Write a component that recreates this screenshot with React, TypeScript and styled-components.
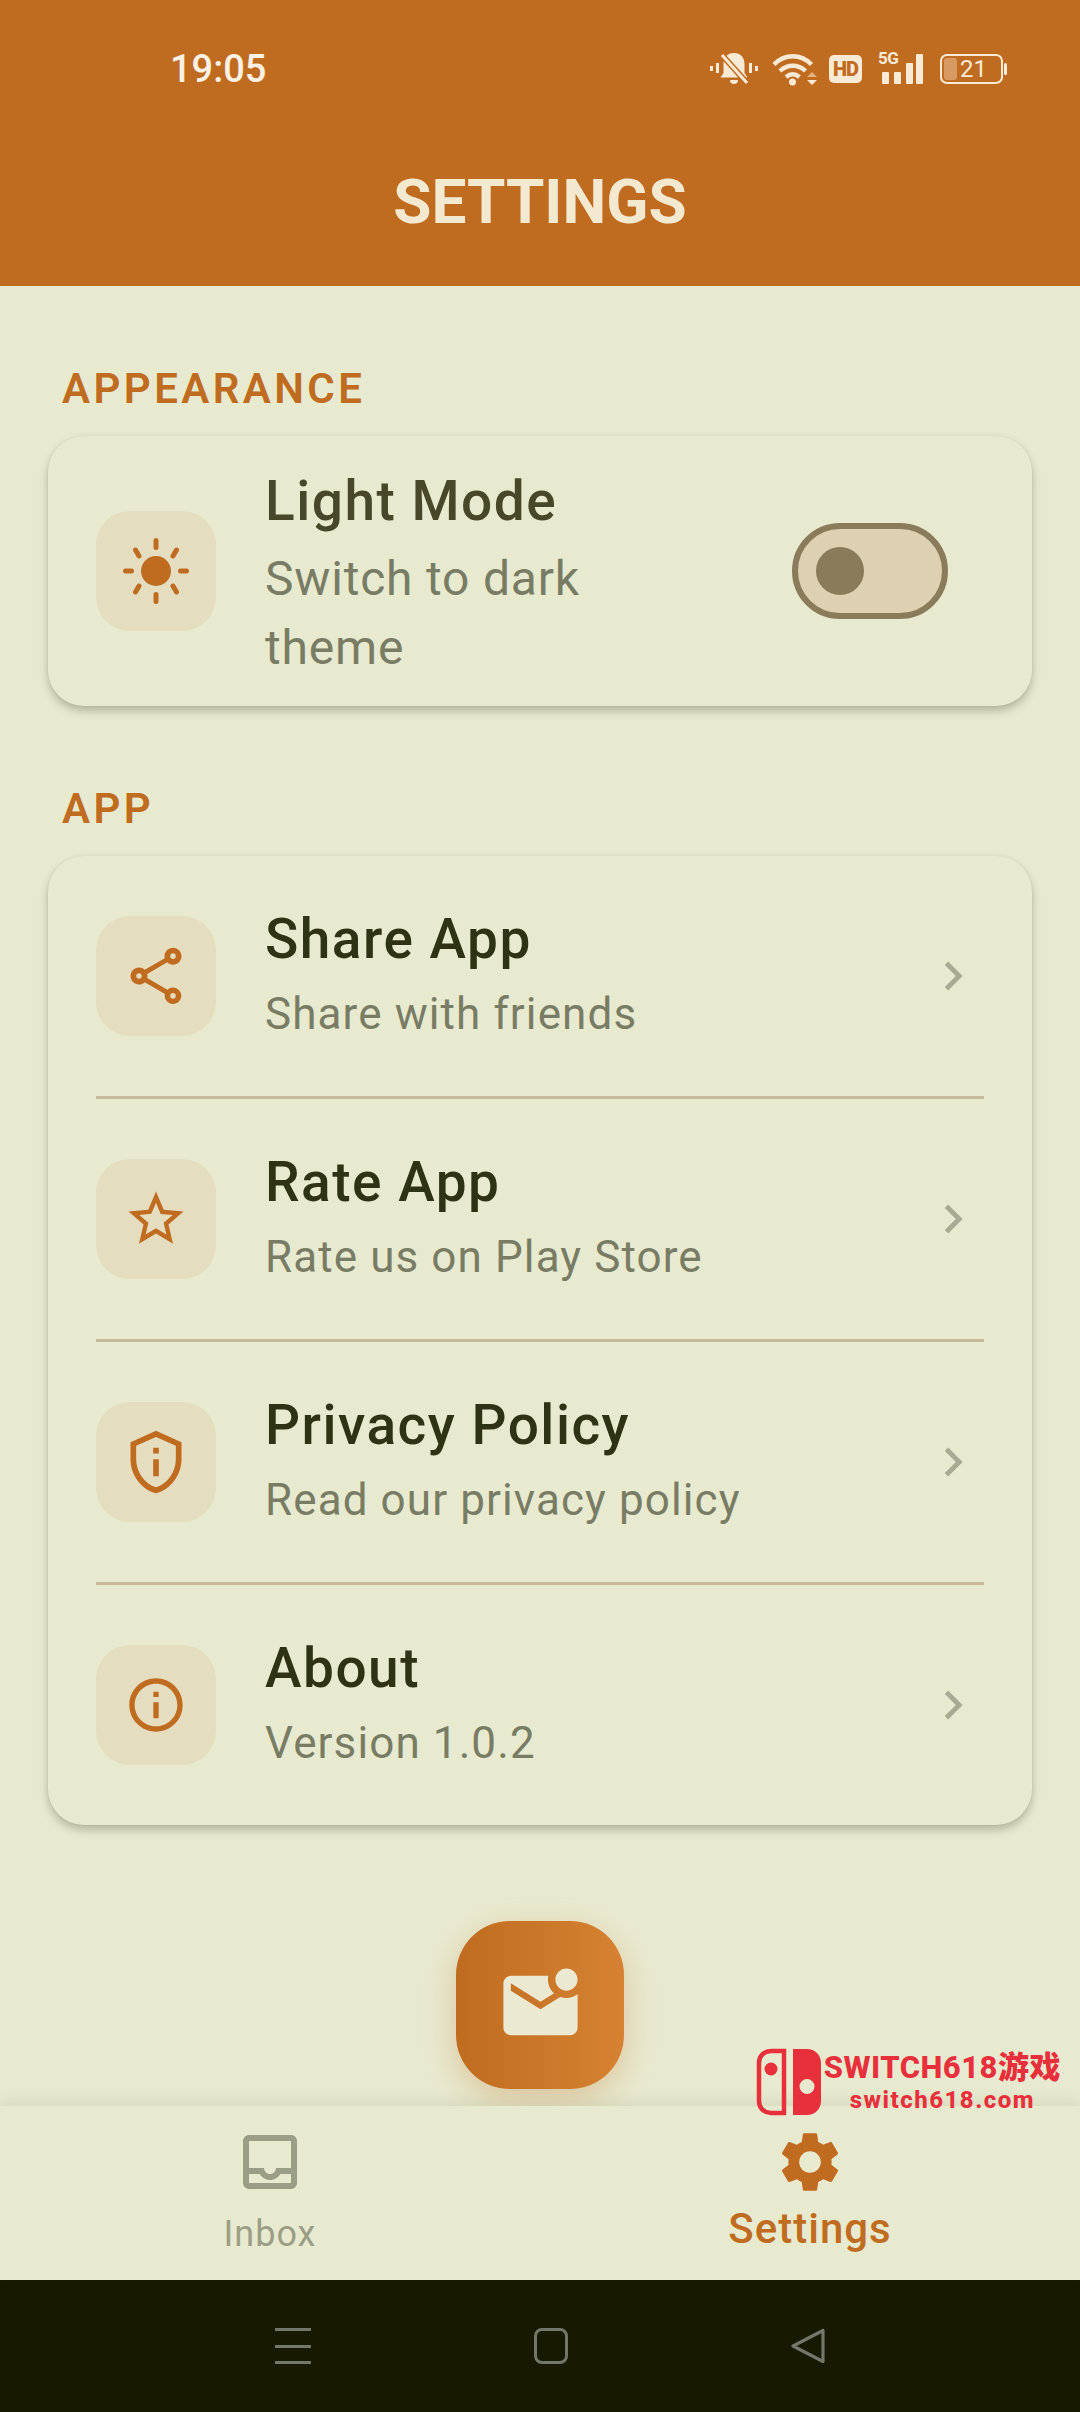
import React from "react";
import styled, { createGlobalStyle } from "styled-components";
import {
  MdChevronRight,
  MdInfoOutline,
  MdMarkEmailUnread,
  MdOutlineInbox,
  MdOutlinePrivacyTip,
  MdOutlineShare,
  MdSettings,
  MdStarBorder,
} from "react-icons/md";

const GlobalStyle = createGlobalStyle`
  html, body {
    margin: 0;
    padding: 0;
    background: #e8ead0;
  }
  * {
    box-sizing: border-box;
  }
`;

const ORANGE = "#c06c20";
const font = `Roboto, "Noto Sans CJK SC", sans-serif`;

const SunIcon = () => (
  <svg width="68" height="68" viewBox="0 0 68 68" fill="none">
    <circle cx="34" cy="34" r="15" fill={ORANGE} />
    <g stroke={ORANGE} strokeWidth="5" strokeLinecap="round">
      <path d="M34 3.5v7M34 57.5v7M3.5 34h6M58.5 34h6" />
      <path d="M13.5 13l3.5 6M54.5 13l-3.5 6M13.5 55l3.5-6M54.5 55l-3.5-6" />
    </g>
  </svg>
);

const MuteIcon = () => (
  <svg width="48" height="36" viewBox="0 0 48 36" fill="#f9ead6">
    <path d="M24 2c-6.500 0-10.500 4.500-10.500 11v9l-3 4.500h27l-3-4.500v-9C34.500 6.500 30.500 2 24 2z" />
    <path d="M20 29h8a4 4 0 0 1-8 0z" />
    <path d="M11 3l27 30" stroke="#c06c20" strokeWidth="6" />
    <path d="M12 4l25 28" stroke="#f9ead6" strokeWidth="3" />
    <rect x="0" y="15" width="3" height="5" />
    <rect x="6" y="12" width="3" height="10" />
    <rect x="39" y="12" width="3" height="10" />
    <rect x="45" y="15" width="3" height="5" />
  </svg>
);

const WifiIcon = () => (
  <svg width="45" height="34" viewBox="0 0 45 34" fill="none">
    <g stroke="#f9ead6" strokeWidth="4.4">
      <path d="M2 12.500C12.500 1.500 29 1.500 39.500 12.500" />
      <path d="M8 19c7.500-7 18-7 25.500 0" />
      <path d="M14 25c4.300-3.500 9-3.500 13.500 0" />
    </g>
    <circle cx="20.500" cy="30" r="3.500" fill="#f9ead6" />
    <path d="M35 25h10l-5-5z" fill="#e2b183" />
    <path d="M35 28h10l-5 5z" fill="#f9ead6" />
  </svg>
);

const SignalIcon = () => (
  <svg width="45" height="30" viewBox="0 0 45 30" fill="#f9ead6">
    <rect x="4" y="18" width="7" height="12" rx="1" />
    <rect x="16" y="18" width="7" height="12" rx="1" />
    <rect x="28" y="9" width="7" height="21" rx="1" />
    <rect x="38" y="0" width="7" height="30" rx="1" />
  </svg>
);

const SwitchLogo = () => (
  <svg width="66" height="68" viewBox="0 0 66 68" fill="none">
    <path
      d="M28 3H15C8 3 3 8 3 15v38c0 7 5 12 12 12h13z"
      stroke="#e8303c"
      strokeWidth="4.5"
    />
    <circle cx="15" cy="21" r="6.5" fill="#e8303c" />
    <path
      fillRule="evenodd"
      clipRule="evenodd"
      d="M37 1h14c8 0 14 6 14 14v38c0 8-6 14-14 14H37zM51 31a7.5 7.5 0 1 0 0 15 7.5 7.5 0 0 0 0-15z"
      fill="#e8303c"
    />
  </svg>
);

const settingsRows = [
  { title: "Share App", subtitle: "Share with friends", icon: <MdOutlineShare size={68} /> },
  { title: "Rate App", subtitle: "Rate us on Play Store", icon: <MdStarBorder size={66} /> },
  { title: "Privacy Policy", subtitle: "Read our privacy policy", icon: <MdOutlinePrivacyTip size={68} /> },
  { title: "About", subtitle: "Version 1.0.2", icon: <MdInfoOutline size={64} /> },
];

export default function App() {
  return (
    <Page>
      <GlobalStyle />
      <Header>
        <StatusBar>
          <Clock>19:05</Clock>
          <StatusIcons>
            <MuteSlot>
              <MuteIcon />
            </MuteSlot>
            <WifiIcon />
            <HdBadge>HD</HdBadge>
            <NetworkGroup>
              <NetworkLabel>5G</NetworkLabel>
              <SignalIcon />
            </NetworkGroup>
            <Battery>
              <BatteryFill />
              <BatteryLevel>21</BatteryLevel>
            </Battery>
            <BatteryTip />
          </StatusIcons>
        </StatusBar>
        <Title>SETTINGS</Title>
      </Header>

      <Content>
        <SectionLabel>APPEARANCE</SectionLabel>
        <Card>
          <ToggleRow>
            <IconTile>
              <SunIcon />
            </IconTile>
            <ToggleText>
              <ToggleTitle>Light Mode</ToggleTitle>
              <ToggleSubtitle>
                Switch to dark
                <br />
                theme
              </ToggleSubtitle>
            </ToggleText>
            <Toggle>
              <ToggleKnob />
            </Toggle>
          </ToggleRow>
        </Card>

        <SectionLabel>APP</SectionLabel>
        <Card>
          {settingsRows.map((row, i) => (
            <React.Fragment key={row.title}>
              {i > 0 && <Divider />}
              <Row>
                <IconTile>{row.icon}</IconTile>
                <RowText>
                  <RowTitle>{row.title}</RowTitle>
                  <RowSubtitle>{row.subtitle}</RowSubtitle>
                </RowText>
                <Chevron>
                  <MdChevronRight size={58} />
                </Chevron>
              </Row>
            </React.Fragment>
          ))}
        </Card>

        <FabHolder>
          <Fab>
            <MdMarkEmailUnread size={89} />
          </Fab>
        </FabHolder>
      </Content>

      <BottomNav>
        <NavItem>
          <NavIcon $active={false}>
            <MdOutlineInbox size={72} />
          </NavIcon>
          <NavLabel $active={false}>Inbox</NavLabel>
        </NavItem>
        <NavItem>
          <NavIcon $active>
            <MdSettings size={72} />
          </NavIcon>
          <NavLabel $active>Settings</NavLabel>
        </NavItem>
        <Watermark>
          <SwitchLogo />
          <WatermarkText>
            <WatermarkName>SWITCH618游戏</WatermarkName>
            <WatermarkUrl>switch618.com</WatermarkUrl>
          </WatermarkText>
        </Watermark>
      </BottomNav>

      <SystemBar>
        <MenuLines>
          <span />
          <span />
          <span />
        </MenuLines>
        <HomeSquare />
        <svg width="34" height="36" viewBox="0 0 34 36" fill="none">
          <path
            d="M32 2.500v31L2 18z"
            stroke="#73766a"
            strokeWidth="3.200"
            strokeLinejoin="round"
          />
        </svg>
      </SystemBar>
    </Page>
  );
}

const Page = styled.div`
  width: 1080px;
  height: 2412px;
  display: flex;
  flex-direction: column;
  overflow: hidden;
  background: #e8ead0;
  font-family: ${font};
`;

const Header = styled.header`
  height: 286px;
  flex: none;
  background: ${ORANGE};
  color: #f5ecd6;
  display: flex;
  flex-direction: column;
`;

const StatusBar = styled.div`
  height: 138px;
  padding: 0 73px 0 170px;
  display: flex;
  justify-content: space-between;
  align-items: center;
`;

const Clock = styled.div`
  font-size: 38px;
  font-weight: 500;
  color: #fbf1e4;
`;

const StatusIcons = styled.div`
  display: flex;
  align-items: center;
  gap: 12px;
`;

const MuteSlot = styled.div`
  display: flex;
  margin-right: 2px;
`;

const HdBadge = styled.div`
  width: 33px;
  height: 28px;
  border-radius: 5px;
  background: #f9ead6;
  color: ${ORANGE};
  font-size: 20px;
  font-weight: 900;
  letter-spacing: -1px;
  display: flex;
  align-items: center;
  justify-content: center;
`;

const NetworkGroup = styled.div`
  position: relative;
  width: 45px;
  height: 30px;
  margin: 0 5px 0 4px;
  display: flex;
`;

const NetworkLabel = styled.span`
  position: absolute;
  left: 0;
  top: -5px;
  font-size: 17px;
  font-weight: 700;
  line-height: 18px;
  letter-spacing: -0.5px;
  color: #f9ead6;
`;

const Battery = styled.div`
  position: relative;
  width: 63px;
  height: 30px;
  border: 2px solid #f9ead6;
  border-radius: 7px;
  display: flex;
  align-items: center;
  justify-content: center;
`;

const BatteryFill = styled.div`
  position: absolute;
  left: 2px;
  top: 2px;
  bottom: 2px;
  width: 13px;
  border-radius: 3px;
  background: #d69a62;
`;

const BatteryLevel = styled.span`
  position: relative;
  left: 2px;
  font-size: 24px;
  font-weight: 400;
  color: #f9ead6;
`;

const BatteryTip = styled.div`
  width: 3px;
  height: 12px;
  margin-left: -11px;
  border-radius: 2px;
  background: #f9ead6;
`;

const Title = styled.h1`
  margin: 30px 0 0;
  font-size: 62px;
  font-weight: 700;
  line-height: 68px;
  text-align: center;
  color: #f2e9d0;
`;

const Content = styled.main`
  flex: 1;
  padding: 0 48px;
  display: flex;
  flex-direction: column;
  position: relative;
`;

const SectionLabel = styled.h2`
  margin: 79px 0 23px 14px;
  font-size: 42px;
  font-weight: 600;
  line-height: 48px;
  letter-spacing: 3.400px;
  color: ${ORANGE};
`;

const Card = styled.section`
  flex: none;
  border-radius: 36px;
  background: #e8ead0;
  padding: 0 48px;
  box-shadow: 0 5px 9px rgba(70, 70, 40, 0.3), 0 0 3px rgba(70, 70, 40, 0.08);
`;

const ToggleRow = styled.div`
  height: 270px;
  display: flex;
  align-items: center;
`;

const Row = styled.div`
  height: 240px;
  display: flex;
  align-items: center;
`;

const Divider = styled.div`
  height: 3px;
  background: #c6b99c;
`;

const IconTile = styled.div`
  width: 120px;
  height: 120px;
  flex: none;
  margin-right: 49px;
  border-radius: 34px;
  background: #e4ddbf;
  color: ${ORANGE};
  display: flex;
  align-items: center;
  justify-content: center;
`;

const RowText = styled.div`
  flex: 1;
  min-width: 0;
`;

const ToggleText = styled(RowText)`
  padding-top: 5px;
`;

const RowTitle = styled.div`
  font-size: 55px;
  font-weight: 500;
  line-height: 70px;
  letter-spacing: 1.500px;
  color: #2f3315;
  margin-bottom: 6px;
`;

const ToggleTitle = styled(RowTitle)`
  color: #464829;
  margin-bottom: 8px;
`;

const RowSubtitle = styled.div`
  font-size: 44px;
  line-height: 69px;
  letter-spacing: 1.100px;
  color: #797c64;
`;

const ToggleSubtitle = styled(RowSubtitle)`
  font-size: 48px;
  letter-spacing: 0.800px;
`;

const Toggle = styled.div`
  width: 156px;
  height: 96px;
  margin-right: 36px;
  padding: 0 18px;
  border: 6px solid #8a7c5b;
  border-radius: 48px;
  background: #ddd1b2;
  display: flex;
  align-items: center;
`;

const ToggleKnob = styled.div`
  width: 48px;
  height: 48px;
  border-radius: 50%;
  background: #8a7c5b;
`;

const Chevron = styled.div`
  width: 58px;
  margin-right: 2px;
  color: #a9aa94;
  display: flex;
`;

const FabHolder = styled.div`
  margin-top: 96px;
  display: flex;
  justify-content: center;
`;

const Fab = styled.div`
  width: 168px;
  height: 168px;
  border-radius: 54px;
  background: linear-gradient(90deg, #c06c20, #d68232);
  color: #ece9d2;
  box-shadow: 0 10px 32px rgba(192, 108, 32, 0.3);
  display: flex;
  align-items: center;
  justify-content: center;
`;

const BottomNav = styled.nav`
  position: relative;
  z-index: 1;
  height: 174px;
  flex: none;
  background: #e8ead0;
  box-shadow: 0 -4px 14px rgba(70, 70, 40, 0.1);
  display: grid;
  grid-template-columns: 1fr 1fr;
`;

const NavItem = styled.div`
  display: flex;
  flex-direction: column;
  align-items: center;
  padding-top: 20px;
`;

const NavIcon = styled.div<{ $active: boolean }>`
  height: 72px;
  color: ${(p) => (p.$active ? ORANGE : "#9b9e86")};
`;

const NavLabel = styled.div<{ $active: boolean }>`
  margin-top: ${(p) => (p.$active ? "7px" : "12px")};
  font-size: ${(p) => (p.$active ? "42px" : "36px")};
  font-weight: ${(p) => (p.$active ? 500 : 400)};
  letter-spacing: 1px;
  line-height: 48px;
  color: ${(p) => (p.$active ? ORANGE : "#9b9e86")};
`;

const Watermark = styled.div`
  position: absolute;
  right: 19px;
  top: -58px;
  display: flex;
  align-items: center;
  gap: 2px;
`;

const WatermarkText = styled.div`
  display: flex;
  flex-direction: column;
  align-items: center;
  color: #e8303c;
  font-weight: 800;
`;

const WatermarkName = styled.div`
  font-size: 31px;
  line-height: 36px;
  letter-spacing: 0.500px;
`;

const WatermarkUrl = styled.div`
  font-size: 24px;
  line-height: 28px;
  letter-spacing: 1.500px;
`;

const SystemBar = styled.div`
  height: 132px;
  flex: none;
  padding-left: 19px;
  background: #171a00;
  display: flex;
  align-items: center;
  justify-content: center;
  gap: 223px;
`;

const MenuLines = styled.div`
  width: 36px;
  height: 36px;
  display: flex;
  flex-direction: column;
  justify-content: space-between;

  & span {
    display: block;
    height: 3px;
    background: #73766a;
  }
`;

const HomeSquare = styled.div`
  width: 34px;
  height: 36px;
  border: 3px solid #73766a;
  border-radius: 8px;
`;
